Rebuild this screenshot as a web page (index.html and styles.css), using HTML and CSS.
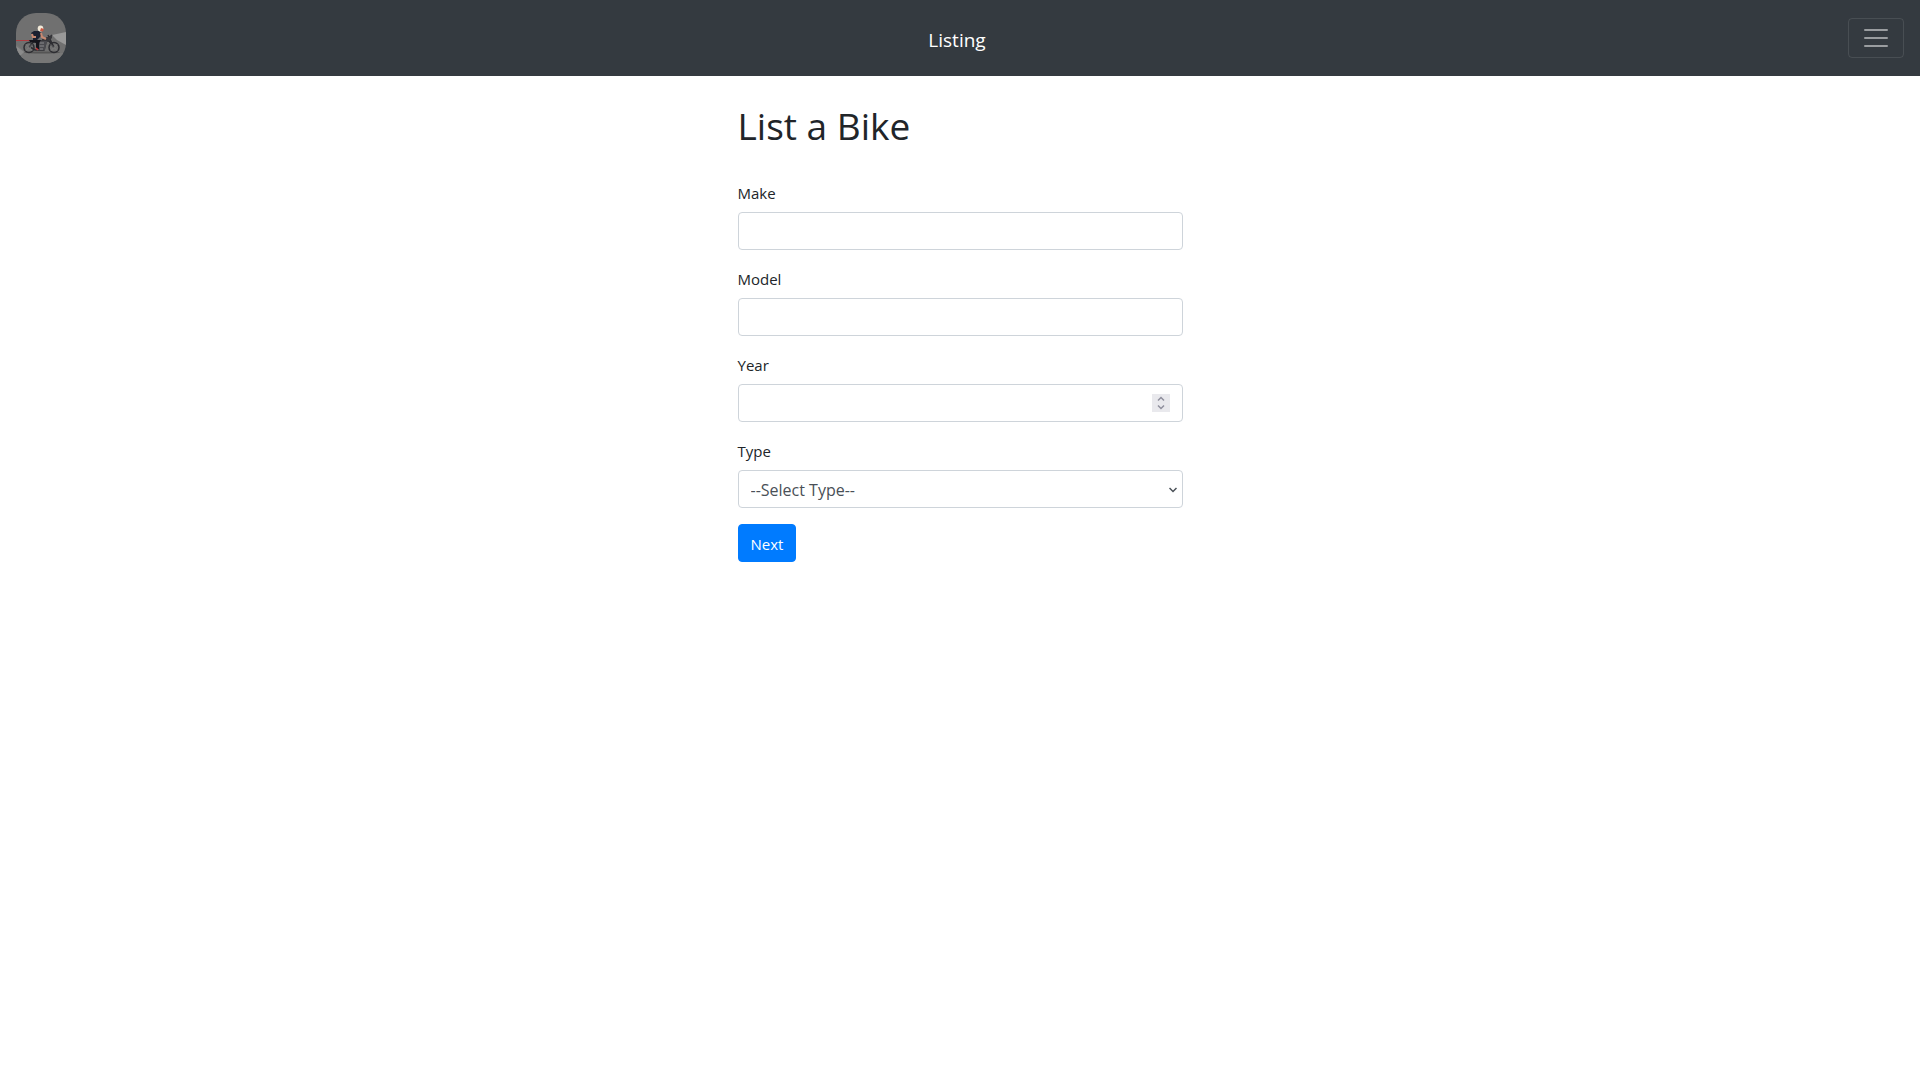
FILE: index.html
```html
<!DOCTYPE html>
<html lang="en">
<head>
  <meta charset="utf-8">
  <meta name="viewport" content="width=device-width, initial-scale=1">
  <title>List a Bike</title>
  <link rel="stylesheet" href="styles.css">
</head>
<body>
  <nav class="navbar">
    <a class="brand" href="#" aria-label="Home">
      <svg class="logo" viewBox="0 0 50 50" aria-hidden="true">
        <rect width="50" height="50" fill="#707070"/>
        <path d="M0 31 10 40H50V50H0Z" fill="#777"/>
        <path d="M0 33 8 39 5 42H0Z" fill="#8b8b8b"/>
        <path d="M36 22 50 19V32L41 27Z" fill="#999"/>
        <ellipse cx="26" cy="39.5" rx="18" ry="1" fill="#555"/>
        <path d="M0 27.5H14" stroke="#bd3035" stroke-width=".8"/>
        <g fill="none" stroke="#2d2d32" stroke-width="1.5">
          <circle cx="13" cy="34.5" r="5"/>
          <circle cx="38" cy="34.5" r="5"/>
          <path d="M13 34.5 18 28H33L38 34.5M32 22 38 34.5M30 29 28 37H19L15 34.5M30 25H33L36 22"/>
        </g>
        <g stroke="#8d8d8d" stroke-width=".5">
          <path d="M9.500 31 16.500 38M9.500 38 16.500 31M34.500 31 41.500 38M34.500 38 41.500 31"/>
        </g>
        <path d="M23 28H31L29 37H22Z" fill="#4b4b50"/>
        <path d="M24 30H28M23.500 33H28M24 36H27" stroke="#aaa" stroke-width=".7"/>
        <path d="M26 26 33 24 36 22V25L33 28H26Z" fill="#37373b"/>
        <path d="M13 27H25L23 30V36H20V30L14 29Z" fill="#15151c"/>
        <path d="M15 20 18 18 23 18 26 21 24 24 21 27H17V23Z" fill="#1b2030"/>
        <path d="M16 21 17 24 20 24M25 20 26 24 30 26" fill="none" stroke="#c88971" stroke-width="2"/>
        <path d="M20 35 22 37" stroke="#c83838" stroke-width="1.5"/>
        <ellipse cx="24.5" cy="15.5" rx="2.800" ry="3" fill="#f1e9d8"/>
        <path d="M25 15 28 16 27 18.500 24 18Z" fill="#c85742"/>
      </svg>
    </a>
    <a class="title" href="#">Listing</a>
    <button class="toggler" type="button" aria-label="Toggle navigation">
      <svg class="toggler-icon" viewBox="0 0 30 30" aria-hidden="true">
        <path d="M4 7h22M4 15h22M4 23h22" stroke="#fff" stroke-opacity=".5" stroke-width="2" stroke-linecap="round"/>
      </svg>
    </button>
  </nav>
  <main class="content">
    <h1 class="heading">List a Bike</h1>
    <form>
      <div class="group">
        <label class="label" for="make">Make</label>
        <input class="control" id="make" type="text">
      </div>
      <div class="group">
        <label class="label" for="model">Model</label>
        <input class="control" id="model" type="text">
      </div>
      <div class="group">
        <label class="label" for="year">Year</label>
        <div class="field">
          <input class="control" id="year" type="number">
          <svg class="spinner" viewBox="0 0 18 18" aria-hidden="true">
            <path d="M6 6.500 9 3.500 12 6.500M6 11.500 9 14.500 12 11.500" fill="none" stroke="#8f8f9d" stroke-width="1.500"/>
          </svg>
        </div>
      </div>
      <div class="group">
        <label class="label" for="type">Type</label>
        <div class="field">
          <select class="control" id="type">
            <option>--Select Type--</option>
          </select>
          <svg class="chevron" viewBox="0 0 8 6" aria-hidden="true">
            <path d="M.5 1 4 4.500 7.500 1" fill="none" stroke="#495057" stroke-width="1.500"/>
          </svg>
        </div>
      </div>
      <button class="submit" type="submit">Next</button>
    </form>
  </main>
</body>
</html>
```

FILE: styles.css
```css
*,
*::before,
*::after {
  box-sizing: border-box;
}

body {
  margin: 0;
  background: #fff;
  color: #212529;
  font-family: "Segoe UI", "Open Sans", "Noto Sans", sans-serif;
  font-size: 15px;
  line-height: 24px;
}

.navbar {
  display: flex;
  align-items: center;
  justify-content: space-between;
  padding: 13px 16px;
  background: #343a40;
}

.brand,
.title {
  margin-right: 16px;
  color: #fff;
  text-decoration: none;
}

.title {
  padding-top: 4px;
  font-size: 19px;
  line-height: 30px;
}

.logo {
  display: block;
  width: 50px;
  height: 50px;
  border-radius: 20px;
}

.toggler {
  padding: 4px 12px;
  border: 1px solid rgba(255, 255, 255, 0.1);
  border-radius: 4px;
  background: transparent;
}

.toggler-icon {
  display: block;
  width: 30px;
  height: 30px;
}

.content {
  max-width: 475px;
  margin: 0 auto;
  padding: 26px 15px;
}

.heading {
  margin: 0 0 30px;
  font-size: 37px;
  font-weight: 400;
  line-height: 48px;
}

.group {
  margin-bottom: 16px;
}

.label {
  display: block;
  margin-bottom: 6px;
  line-height: 26px;
}

.field {
  position: relative;
}

.control {
  display: block;
  width: 100%;
  height: 38px;
  padding: 7px 12px 5px;
  border: 1px solid #ced4da;
  border-radius: 4px;
  background: #fff;
  color: #495057;
  font: inherit;
  font-size: 16px;
  appearance: none;
}

.control::-webkit-inner-spin-button {
  appearance: none;
}

.spinner {
  position: absolute;
  top: 10px;
  right: 13px;
  width: 18px;
  height: 18px;
  background: #e9e9ed;
  pointer-events: none;
}

.chevron {
  position: absolute;
  top: 17px;
  right: 6px;
  width: 8px;
  height: 6px;
  pointer-events: none;
}

.submit {
  padding: 7px 12px 5px;
  border: 1px solid #007bff;
  border-radius: 4px;
  background: #007bff;
  color: #fff;
  font: inherit;
}
```
